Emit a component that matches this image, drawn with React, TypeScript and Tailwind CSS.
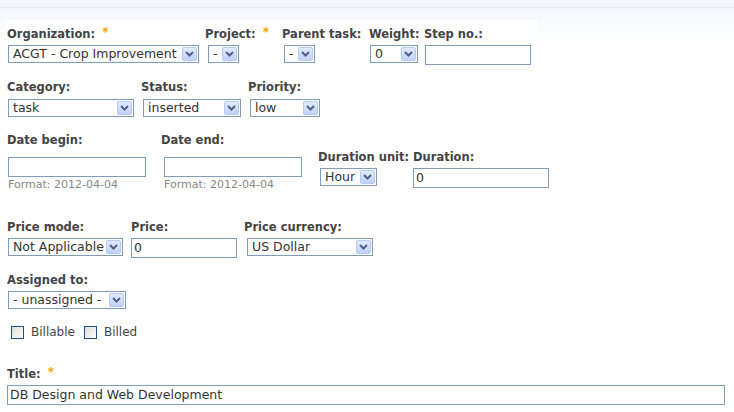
import React from "react";

const labelCls =
  "block h-[14px] leading-[14px] text-[11.5px] font-bold text-[#444] whitespace-nowrap";

function Req() {
  return (
    <span className="relative -top-[2px] ml-[7px] text-[12px] font-bold text-[#f6a500]">*</span>
  );
}

function Label({ text, req }: { text: string; req?: boolean }) {
  return (
    <span className={labelCls}>
      {text}
      {req && <Req />}
    </span>
  );
}

function Arrow() {
  return (
    <span className="mr-px flex h-[14px] w-[15px] shrink-0 items-center justify-center rounded-[2px] border border-[#b8caf4] bg-[linear-gradient(to_bottom,#e1eafe,#c0d1fb)]">
      <svg width="9" height="6" viewBox="0 0 9 6">
        <path d="M1 1 L4.5 4.5 L8 1" fill="none" stroke="#4d6185" strokeWidth="2" />
      </svg>
    </span>
  );
}

function Select({ value, className }: { value: string; className: string }) {
  return (
    <div
      className={`flex h-[18px] items-center border border-[#7f9db9] bg-white ${className}`}
    >
      <span className="flex-1 overflow-hidden whitespace-nowrap pl-[4px] text-[12.5px] leading-[16px] text-[#333]">
        {value}
      </span>
      <Arrow />
    </div>
  );
}

function Input({ value, className }: { value?: string; className: string }) {
  return (
    <div
      className={`h-[20px] border border-[#7f9db9] bg-white pl-[2px] text-[12.5px] leading-[18px] text-[#333] whitespace-nowrap ${className}`}
    >
      {value}
    </div>
  );
}

function Check({ label }: { label: string }) {
  return (
    <span className="flex items-center">
      <span className="h-[13px] w-[13px] border border-[#1c5180] bg-[linear-gradient(135deg,#dcdcd7,#ffffff)]" />
      <span className="ml-[7px] text-[12px] leading-[14px] text-[#444]">{label}</span>
    </span>
  );
}

export default function App() {
  return (
    <div className="min-h-[412px] w-full bg-[linear-gradient(to_bottom,#f3f7fa_0px,#f3f7fa_7px,#e4ebf0_7px,#e4ebf0_8px,#f4f8fc_8px,#ffffff_44px)] pt-[20px] font-['DejaVu_Sans',sans-serif]">
      <form className="ml-[6px] w-[532px] bg-white pl-px pb-[7px]">
        {/* organisation / project / parent / weight / step */}
        <div className="flex pt-[7px]">
          <div className="w-[198px] shrink-0">
            <Label text="Organization:" req />
            <Select value="ACGT - Crop Improvement" className="ml-px mt-[4px] w-[191px]" />
          </div>
          <div className="w-[77px] shrink-0">
            <Label text="Project:" req />
            <Select value="-" className="ml-[3px] mt-[4px] w-[31px]" />
          </div>
          <div className="w-[87px] shrink-0">
            <Label text="Parent task:" />
            <Select value="-" className="ml-[2px] mt-[4px] w-[31px]" />
          </div>
          <div className="w-[55px] shrink-0">
            <Label text="Weight:" />
            <Select value="0" className="ml-px mt-[4px] w-[48px]" />
          </div>
          <div className="shrink-0">
            <Label text="Step no.:" />
            <Input className="ml-px mt-[4px] w-[106px]" />
          </div>
        </div>

        {/* category / status / priority */}
        <div className="mt-[15px] flex">
          <div className="w-[134px] shrink-0">
            <Label text="Category:" />
            <Select value="task" className="ml-px mt-[5px] w-[126px]" />
          </div>
          <div className="w-[107px] shrink-0">
            <Label text="Status:" />
            <Select value="inserted" className="ml-[2px] mt-[5px] w-[98px]" />
          </div>
          <div className="shrink-0">
            <Label text="Priority:" />
            <Select value="low" className="ml-[2px] mt-[5px] w-[70px]" />
          </div>
        </div>

        {/* dates and duration */}
        <div className="mt-[16px] flex">
          <div className="w-[154px] shrink-0">
            <Label text="Date begin:" />
            <Input className="ml-px mt-[10px] w-[138px]" />
            <div className="ml-px mt-px text-[11px] leading-[13px] text-[#888]">Format: 2012-04-04</div>
          </div>
          <div className="w-[157px] shrink-0">
            <Label text="Date end:" />
            <Input className="ml-[3px] mt-[10px] w-[138px]" />
            <div className="ml-[3px] mt-px text-[11px] leading-[13px] text-[#888]">Format: 2012-04-04</div>
          </div>
          <div className="mt-[17px] w-[95px] shrink-0">
            <Label text="Duration unit:" />
            <Select value="Hour" className="ml-[2px] mt-[4px] w-[57px]" />
          </div>
          <div className="mt-[17px] shrink-0">
            <Label text="Duration:" />
            <Input value="0" className="mt-[4px] w-[136px]" />
          </div>
        </div>

        {/* price */}
        <div className="mt-[29px] flex">
          <div className="w-[124px] shrink-0">
            <Label text="Price mode:" />
            <Select value="Not Applicable" className="ml-px mt-[4px] w-[115px]" />
          </div>
          <div className="w-[113px] shrink-0">
            <Label text="Price:" />
            <Input value="0" className="mt-[4px] w-[106px]" />
          </div>
          <div className="shrink-0">
            <Label text="Price currency:" />
            <Select value="US Dollar" className="ml-[3px] mt-[4px] w-[126px]" />
          </div>
        </div>

        {/* assignee */}
        <div className="mt-[15px]">
          <Label text="Assigned to:" />
          <Select value="- unassigned -" className="ml-px mt-[4px] w-[118px]" />
        </div>

        {/* flags */}
        <div className="ml-[4px] mt-[16px] flex items-center gap-[9px]">
          <Check label="Billable" />
          <Check label="Billed" />
        </div>

        {/* title */}
        <div className="mt-[28px]">
          <Label text="Title:" req />
          <Input value="DB Design and Web Development" className="mt-[4px] w-[718px]" />
        </div>
      </form>
    </div>
  );
}
